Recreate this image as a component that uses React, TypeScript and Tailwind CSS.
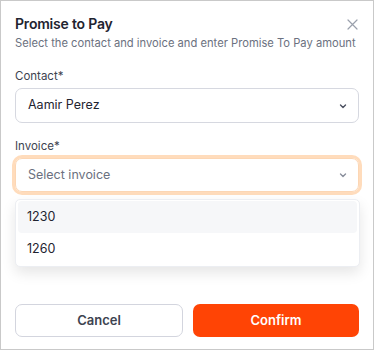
import React from 'react';

function Chevron({ className }: { className: string }) {
  return (
    <svg width="10" height="10" viewBox="0 0 10 10" className={className} fill="none">
      <path d="M2.5 4L5 6.5L7.5 4" stroke="currentColor" strokeWidth="1.4" strokeLinecap="round" strokeLinejoin="round" />
    </svg>
  );
}

function App() {
  const invoices = ['1230', '1260'];

  return (
    <div className="w-[374px] h-[350px] border border-[#c9c9c9] bg-white px-[14px] pt-[14px] flex flex-col" style={{ fontFamily: 'Inter, "Noto Sans", sans-serif' }}>
      <div className="flex items-start justify-between">
        <h2 className="text-[14px] leading-[18px] font-semibold tracking-[-0.2px] text-[#1f2430]">Promise to Pay</h2>
        <button className="mt-[4px] mr-[1px] text-[#9aa0ac]">
          <svg width="11" height="11" viewBox="0 0 11 11" fill="none">
            <path d="M1 1L10 10M10 1L1 10" stroke="currentColor" strokeWidth="1.2" strokeLinecap="round" />
          </svg>
        </button>
      </div>
      <p className="mt-[2px] text-[11.2px] leading-[16px] whitespace-nowrap text-[#6b7180]">
        Select the contact and invoice and enter Promise To Pay amount
      </p>

      <label className="mt-[17px] text-[11.5px] leading-[16px] text-[#3d4350]">Contact*</label>
      <div className="mt-[4px] h-[35px] rounded-[7px] border border-[#d6d8e0] flex items-center justify-between pl-[12px] pr-[10px]">
        <span className="text-[12.5px] text-[#1f2430]">Aamir Perez</span>
        <Chevron className="text-[#4b5060]" />
      </div>

      <label className="mt-[15px] text-[11.5px] leading-[16px] text-[#3d4350]">Invoice*</label>
      <div className="mt-[4px] h-[34px] rounded-[7px] border border-[#fcd6b4] ring-[3px] ring-[#ffdcbc] flex items-center justify-between pl-[12px] pr-[10px]">
        <span className="text-[12.5px] text-[#6b7180]">Select invoice</span>
        <Chevron className="text-[#8a8f9c]" />
      </div>

      <div className="relative">
        <div className="absolute left-0 right-[-1px] top-[7px] rounded-[5px] border border-[#eceef2] bg-white px-[2px] py-[1px] shadow-[0_6px_14px_rgba(0,0,0,0.10)]">
          {invoices.map((inv, i) => (
            <div
              key={inv}
              className={`h-[32px] rounded-[4px] flex items-center px-[9px] text-[12.5px] text-[#1f2430] ${i === 0 ? 'bg-[#f6f7f9]' : ''}`}
            >
              {inv}
            </div>
          ))}
        </div>
      </div>

      <div className="mt-auto mb-[12px] flex gap-[10px]">
        <button className="flex-1 h-[33px] rounded-[7px] border border-[#d3d5de] bg-white text-[13px] font-semibold text-[#3d4350]">
          Cancel
        </button>
        <button className="flex-1 h-[33px] rounded-[7px] bg-[#ff4405] text-[13px] font-semibold text-white">
          Confirm
        </button>
      </div>
    </div>
  );
}

export default App;
